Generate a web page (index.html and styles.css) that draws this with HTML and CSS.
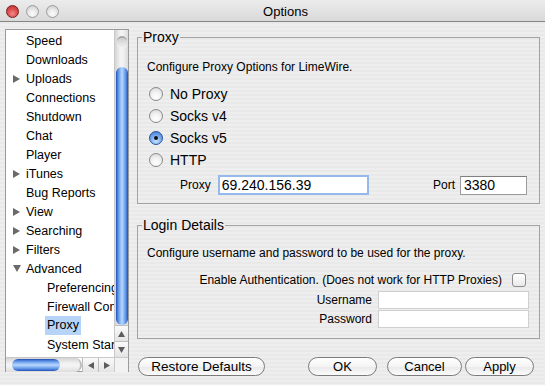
FILE: index.html
```html
<!DOCTYPE html>
<html lang="en">
<head>
    <meta charset="UTF-8">
    <title>Options</title>
    <link rel="stylesheet" href="styles.css">
</head>
<body>
    <div class="titlebar">
        <div class="lights">
            <span class="light close"></span>
            <span class="light"></span>
            <span class="light"></span>
        </div>
        <div class="title">Options</div>
    </div>

    <div class="main">
        <!-- option tree -->
        <div class="tree">
            <ul class="tree-list">
                <li><span class="arrow"></span>Speed</li>
                <li><span class="arrow"></span>Downloads</li>
                <li><span class="arrow"><svg width="7" height="8"><path d="M0 0L7 4L0 8Z"/></svg></span>Uploads</li>
                <li><span class="arrow"></span>Connections</li>
                <li><span class="arrow"></span>Shutdown</li>
                <li><span class="arrow"></span>Chat</li>
                <li><span class="arrow"></span>Player</li>
                <li><span class="arrow"><svg width="7" height="8"><path d="M0 0L7 4L0 8Z"/></svg></span>iTunes</li>
                <li><span class="arrow"></span>Bug Reports</li>
                <li><span class="arrow"><svg width="7" height="8"><path d="M0 0L7 4L0 8Z"/></svg></span>View</li>
                <li><span class="arrow"><svg width="7" height="8"><path d="M0 0L7 4L0 8Z"/></svg></span>Searching</li>
                <li><span class="arrow"><svg width="7" height="8"><path d="M0 0L7 4L0 8Z"/></svg></span>Filters</li>
                <li><span class="arrow"><svg width="8" height="7"><path d="M0 0H8L4 7Z"/></svg></span>Advanced</li>
                <li class="child">Preferencing</li>
                <li class="child">Firewall Config</li>
                <li class="child"><span class="selected">Proxy</span></li>
                <li class="child">System Startup</li>
            </ul>
            <div class="vscroll">
                <div class="vtrack">
                    <div class="vthumb"></div>
                </div>
                <div class="sbtn"><svg width="7" height="6"><path d="M0 6H7L3.5 0Z"/></svg></div>
                <div class="sbtn"><svg width="7" height="6"><path d="M0 0H7L3.5 6Z"/></svg></div>
            </div>
            <div class="hscroll">
                <div class="htrack">
                    <div class="hthumb"></div>
                </div>
                <div class="sbtn"><svg width="6" height="7"><path d="M6 0V7L0 3.5Z"/></svg></div>
                <div class="sbtn"><svg width="6" height="7"><path d="M0 0V7L6 3.5Z"/></svg></div>
            </div>
            <div class="corner"></div>
        </div>

        <div class="pane">
            <fieldset class="group proxy-group">
                <legend>Proxy</legend>
                <div class="desc">Configure Proxy Options for LimeWire.</div>
                <div class="radios">
                    <label class="radio"><span class="dot"></span>No Proxy</label>
                    <label class="radio"><span class="dot"></span>Socks v4</label>
                    <label class="radio"><span class="dot on"></span>Socks v5</label>
                    <label class="radio"><span class="dot"></span>HTTP</label>
                </div>
                <div class="host-row">
                    <span class="small-label">Proxy</span>
                    <input class="field host focused" type="text" value="69.240.156.39">
                    <span class="small-label port-label">Port</span>
                    <input class="field port" type="text" value="3380">
                </div>
            </fieldset>

            <fieldset class="group login-group">
                <legend>Login Details</legend>
                <div class="desc">Configure username and password to be used for the proxy.</div>
                <div class="auth-row">
                    <span class="small-label">Enable Authentication. (Does not work for HTTP Proxies)</span>
                    <span class="checkbox"></span>
                </div>
                <div class="cred-row">
                    <span class="small-label">Username</span>
                    <input class="field cred" type="text">
                </div>
                <div class="cred-row">
                    <span class="small-label">Password</span>
                    <input class="field cred" type="password">
                </div>
            </fieldset>

            <div class="buttons">
                <button class="pill restore">Restore Defaults</button>
                <button class="pill ok">OK</button>
                <button class="pill cancel">Cancel</button>
                <button class="pill apply">Apply</button>
            </div>
        </div>
    </div>
</body>
</html>
```

FILE: styles.css
```css
body {
    margin: 0;
    padding: 0;
    width: 545px;
    height: 385px;
    overflow: hidden;
    font-family: "Liberation Sans", Arial, sans-serif;
    color: #000;
    background: repeating-linear-gradient(#eeeeee 0, #eeeeee 2px, #e9e9e9 2px, #e9e9e9 4px);
}

/* title bar */
.titlebar {
    display: flex;
    align-items: center;
    height: 19px;
    padding-top: 2px;
    background: linear-gradient(#ececec, #d9d9d9);
    border-bottom: 1px solid #858585;
}

.lights {
    display: flex;
    gap: 7px;
    padding-left: 6px;
}

.light {
    width: 11px;
    height: 11px;
    border-radius: 50%;
    border: 1px solid #9d9d9d;
    background: radial-gradient(circle at 50% 70%, #fdfdfd 0, #e6e6e6 50%, #c4c4c4 100%);
}

.light.close {
    border-color: #7a1c1c;
    background: radial-gradient(circle at 50% 70%, #f38a8a 0, #e05252 45%, #b42a2a 100%);
}

.title {
    flex: 1;
    text-align: center;
    padding-right: 33px;
    font-size: 13px;
}

.main {
    display: flex;
    padding: 7px 5px 0 5px;
}

/* tree */
.tree {
    width: 122px;
    height: 341px;
    border: 1px solid #9a9a9a;
    background: #fff;
    display: grid;
    grid-template-columns: 1fr 14px;
    grid-template-rows: 1fr 15px;
    flex-shrink: 0;
}

.tree-list {
    list-style: none;
    margin: 0;
    padding: 1px 0 0 0;
    overflow: hidden;
    font-size: 12.5px;
}

.tree-list li {
    display: flex;
    align-items: center;
    height: 19px;
    white-space: nowrap;
}

.arrow {
    width: 8px;
    margin-left: 7px;
    margin-right: 5px;
    display: flex;
    align-items: center;
}

.arrow svg {
    fill: #6a6a6a;
}

.tree-list li.child {
    padding-left: 41px;
}

.selected {
    background: #b6d4f8;
    margin-left: -2px;
    padding: 0 2px;
    line-height: 19px;
}

/* scrollbars */
.vscroll {
    display: flex;
    flex-direction: column;
    border-left: 1px solid #c9c9c9;
}

.vtrack {
    flex: 1;
    display: flex;
    flex-direction: column;
    align-items: center;
    background: linear-gradient(to right, #d4d4d4, #f3f3f3 40%, #f3f3f3 60%, #dcdcdc);
}

.vtrack::before {
    content: "";
    width: 10px;
    height: 9px;
    margin-top: 6px;
    margin-bottom: 20px;
    border-radius: 6px 6px 0 0;
    border-top: 2px solid #a9a9a9;
    background: linear-gradient(#cfcfcf, #eeeeee);
}

.vthumb {
    width: 12px;
    height: 258px;
    border-radius: 6px;
    background: linear-gradient(to right, #1f4fb3, #5b90e4 18%, #96bff6 38%, #b9d7fc 50%, #96bff6 62%, #5b90e4 82%, #1f4fb3);
}

.sbtn {
    display: flex;
    align-items: center;
    justify-content: center;
    background: linear-gradient(#fafafa, #e4e4e4);
}

.sbtn svg {
    fill: #5c5c5c;
}

.vscroll .sbtn {
    height: 15px;
    border-top: 1px solid #bdbdbd;
}

.hscroll {
    display: flex;
    border-top: 1px solid #c9c9c9;
}

.htrack {
    flex: 1;
    display: flex;
    align-items: center;
    background: linear-gradient(#d4d4d4, #f3f3f3 40%, #f3f3f3 60%, #dcdcdc);
    border-right: 2px solid #bdbdbd;
    border-radius: 0 7px 7px 0;
}

.hthumb {
    width: 48px;
    height: 12px;
    margin-left: 6px;
    border-radius: 6px;
    background: linear-gradient(#1f4fb3, #5b90e4 18%, #96bff6 38%, #b9d7fc 50%, #96bff6 62%, #5b90e4 82%, #1f4fb3);
}

.hscroll .sbtn {
    width: 15px;
    border-left: 1px solid #bdbdbd;
}

.corner {
    background: #f2f2f2;
    border-left: 1px solid #c9c9c9;
    border-top: 1px solid #c9c9c9;
}

/* right pane */
.pane {
    flex: 1;
    margin-left: 8px;
    min-width: 0;
}

.group {
    margin: 0;
    padding: 0 0 8px 0;
    border: 1px solid #a3a3a3;
    min-width: 0;
}

.group legend {
    margin-left: 4px;
    padding: 0 1px;
    font-size: 14px;
    line-height: 14px;
}

.proxy-group {
    margin-top: 1px;
}

.desc {
    font-size: 12px;
    line-height: 16px;
    margin: 15px 0 0 9px;
}

.radios {
    margin-top: 8px;
    padding-left: 11px;
}

.radio {
    display: flex;
    align-items: center;
    gap: 7px;
    height: 22px;
    font-size: 14px;
}

.dot {
    width: 12px;
    height: 12px;
    border-radius: 50%;
    border: 1px solid #8a8a8a;
    background: radial-gradient(circle at 50% 75%, #ffffff 0, #f2f2f2 45%, #d2d2d2 100%);
    display: flex;
    align-items: center;
    justify-content: center;
}

.dot.on {
    border-color: #27549e;
    background: radial-gradient(circle at 50% 75%, #c9e2ff 0, #7fb0ef 45%, #3c70c8 100%);
}

.dot.on::after {
    content: "";
    width: 4px;
    height: 4px;
    border-radius: 50%;
    background: #111;
}

.small-label {
    font-size: 12px;
}

.host-row {
    display: flex;
    align-items: center;
    height: 20px;
    margin-top: 4px;
    padding-left: 42px;
}

.field {
    box-sizing: border-box;
    margin: 0;
    font-family: "Liberation Sans", Arial, sans-serif;
    font-size: 14px;
    padding: 0 3px;
    background: #fff;
    border: 1px solid #9c9c9c;
    border-top-color: #7f7f7f;
    outline: none;
}

.host {
    width: 151px;
    height: 20px;
    margin-left: 7px;
}

.host.focused {
    border: 2px solid #95b9ea;
    padding: 0 2px;
}

.port-label {
    margin-left: auto;
}

.port {
    width: 67px;
    height: 19px;
    margin-left: 5px;
    margin-right: 12px;
}

.login-group {
    margin-top: 14px;
    padding-bottom: 10px;
}

.login-group .desc {
    margin-top: 13px;
}

.auth-row {
    display: flex;
    align-items: center;
    justify-content: flex-end;
    gap: 10px;
    height: 16px;
    margin-top: 11px;
    padding-right: 13px;
}

.checkbox {
    box-sizing: border-box;
    width: 14px;
    height: 14px;
    border: 1px solid #8c8c8c;
    border-radius: 3px;
    background: linear-gradient(#ffffff, #e9e9e9);
}

.cred-row {
    display: flex;
    align-items: center;
    justify-content: flex-end;
    gap: 6px;
    height: 18px;
    margin-top: 1px;
    padding-right: 10px;
}

.auth-row + .cred-row {
    margin-top: 3px;
}

.cred {
    width: 151px;
    height: 18px;
    border: 1px solid #cfcfcf;
}

/* buttons */
.buttons {
    display: flex;
    margin-top: 18px;
    padding-left: 1px;
}

.pill {
    height: 19px;
    padding: 0;
    font-family: "Liberation Sans", Arial, sans-serif;
    font-size: 13px;
    color: #000;
    border: 1px solid #7b7b7b;
    border-radius: 10px;
    background: linear-gradient(#ffffff, #f4f4f4 50%, #e9e9e9 51%, #fbfbfb);
    cursor: pointer;
}

.restore {
    width: 127px;
    font-size: 13.5px;
}

.ok {
    width: 69px;
    margin-left: auto;
}

.cancel {
    width: 75px;
    margin-left: 10px;
}

.apply {
    width: 69px;
    margin-left: 3px;
    margin-right: 6px;
}
```
